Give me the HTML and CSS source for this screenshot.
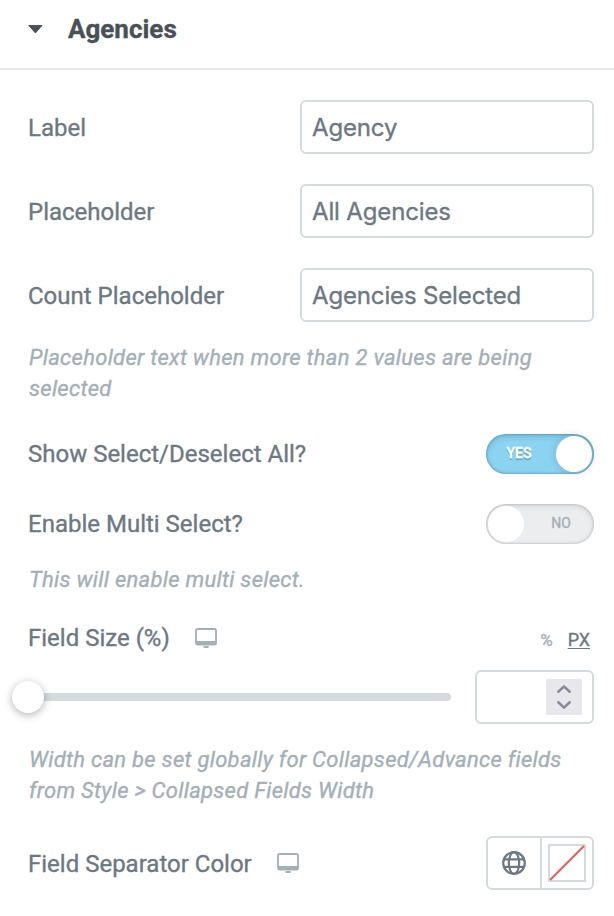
FILE: index.html
```html
<!DOCTYPE html>
<html lang="en">
<head>
<meta charset="utf-8">
<title>Agencies</title>
<link rel="stylesheet" href="styles.css">
</head>
<body>
<section class="panel">
  <header class="section-head">
    <svg class="caret" width="16" height="10" viewBox="0 0 16 10"><path d="M1.8 1.5H15L8.4 8.9Z" fill="#495157" stroke="#495157" stroke-linejoin="round"/></svg>
    <h1 class="section-title">Agencies</h1>
  </header>
  <div class="controls">
    <div class="control">
      <div class="row"><label class="label label-tall" for="f-label">Label</label><input class="input" id="f-label" type="text" value="Agency"></div>
    </div>
    <div class="control">
      <div class="row"><label class="label label-tall" for="f-ph">Placeholder</label><input class="input" id="f-ph" type="text" value="All Agencies"></div>
    </div>
    <div class="control">
      <div class="row"><label class="label label-tall" for="f-count">Count Placeholder</label><input class="input" id="f-count" type="text" value="Agencies Selected"></div>
      <p class="description">Placeholder text when more than 2 values are being selected</p>
    </div>
    <div class="control">
      <div class="row"><span class="label">Show Select/Deselect All?</span><div class="switch switch-on"><span class="switch-text">YES</span><span class="knob"></span></div></div>
    </div>
    <div class="control">
      <div class="row"><span class="label">Enable Multi Select?</span><div class="switch"><span class="knob"></span><span class="switch-text">NO</span></div></div>
      <p class="description">This will enable multi select.</p>
    </div>
    <div class="control">
      <div class="row size-head">
        <span class="label">Field Size (%)</span>
        <svg class="monitor" width="22" height="20" viewBox="0 0 22 20"><rect x="1" y="1" width="20" height="15.5" rx="1.6" fill="none" stroke="#a4afb7" stroke-width="1.8"/><path d="M1 13H21V15.5Q21 16.8 19.7 16.8H2.3Q1 16.8 1 15.5Z" fill="#a4afb7"/><path d="M9.3 19H12.9" stroke="#a4afb7" stroke-width="1.8" stroke-linecap="round"/></svg>
        <div class="units"><span class="unit">%</span><span class="unit unit-active">PX</span></div>
      </div>
      <div class="slider-row">
        <div class="slider"><span class="handle"></span><span class="track"></span></div>
        <div class="number">
          <div class="spinner"><svg width="36" height="36" viewBox="0 0 36 36" fill="none" stroke="#8b8a98" stroke-width="2.6" stroke-linecap="round" stroke-linejoin="round"><path d="M12.3 12.7L18 7.4L23.7 12.7"/><path d="M12.3 23.3L18 28.6L23.7 23.3"/></svg></div>
        </div>
      </div>
      <p class="description">Width can be set globally for Collapsed/Advance fields from Style &gt; Collapsed Fields Width</p>
    </div>
    <div class="control">
      <div class="row">
        <span class="label label-tall">Field Separator Color</span>
        <svg class="monitor" width="22" height="20" viewBox="0 0 22 20"><rect x="1" y="1" width="20" height="15.5" rx="1.6" fill="none" stroke="#a4afb7" stroke-width="1.8"/><path d="M1 13H21V15.5Q21 16.8 19.7 16.8H2.3Q1 16.8 1 15.5Z" fill="#a4afb7"/><path d="M9.3 19H12.9" stroke="#a4afb7" stroke-width="1.8" stroke-linecap="round"/></svg>
        <div class="color-group">
          <div class="color-cell globe"><svg width="24" height="24" viewBox="0 0 24 24" fill="none" stroke="#6d7882" stroke-width="2.2"><circle cx="12" cy="12" r="10.8"/><ellipse cx="12" cy="12" rx="5.2" ry="10.8"/><path d="M1.8 8.3H22.2M1.8 15.8H22.2"/></svg></div>
          <div class="color-cell"><svg width="38" height="38" viewBox="0 0 38 38"><rect x="1" y="1" width="36" height="36" fill="#fff" stroke="#d5dadf" stroke-width="2"/><path d="M2 36L36 2" stroke="#ea6462" stroke-width="2.3"/></svg></div>
        </div>
      </div>
    </div>
  </div>
</section>
</body>
</html>
```
FILE: styles.css
```css
* { box-sizing: border-box; }
body {
  margin: 0;
  background: #fff;
  color: #6d7882;
  font-family: Roboto, "Liberation Sans", sans-serif;
  font-size: 24px;
  -webkit-text-stroke: 0.35px currentColor;
}
svg { display: block; flex: none; }
.section-head {
  display: flex;
  align-items: center;
  height: 70px;
  padding: 0 28px 10px 27px;
  border-bottom: 2px solid #e6e9ec;
}
.caret { margin-right: 25px; }
.section-title {
  margin: 0;
  font-size: 26px;
  font-weight: 700;
  line-height: 30px;
  color: #495157;
}
.controls {
  display: flex;
  flex-direction: column;
  gap: 30px;
  padding: 30px 20px 26px 28px;
}
.row { display: flex; align-items: center; }
.label { line-height: 28px; white-space: nowrap; }
.label-tall { padding-top: 2px; }
.input {
  width: 294px;
  height: 54px;
  margin-left: auto;
  padding: 0 10px;
  border: 2px solid #d5dadf;
  border-radius: 6px;
  outline: none;
  background: #fff;
  color: #6d7882;
  font: 24px/28px Inter, sans-serif;
  letter-spacing: -0.15px;
}
.description {
  margin: 20px 0 0 1px;
  color: #a4afb7;
  font-size: 22px;
  font-style: italic;
  letter-spacing: 0.28px;
  line-height: 31px;
}
.switch {
  display: flex;
  align-items: center;
  width: 108px;
  height: 40px;
  margin-left: auto;
  padding: 2px;
  border-radius: 20px;
  background: #ebedef;
  box-shadow: inset 0 0 2px 1px rgba(0,0,0,.12), inset 0 2px 6px rgba(0,0,0,.1);
  color: #a4afb7;
  font-size: 14px;
  font-weight: 400;
}
.switch-text { flex: 1; padding-left: 6px; text-align: center; line-height: 18px; margin-top: -2px; }
.switch-on {
  background: #8bd3f1;
  box-shadow: inset 0 0 2px 1px rgba(0,60,90,.22), inset 0 2px 6px rgba(0,60,90,.18);
  color: #fff;
}
.switch-on .switch-text { padding: 0 6px 0 0; font-weight: 500; text-shadow: 0 2px 1px rgba(0,0,0,.25); }
.knob {
  width: 36px;
  height: 36px;
  border-radius: 50%;
  background: #fff;
}
.switch-on .knob { box-shadow: 0 0 8px 1px rgba(0,0,0,.13); }
.monitor { margin-left: 25px; }
.size-head { height: 26px; }
.units {
  display: flex;
  gap: 15px;
  margin-left: auto;
  padding: 3px 4px 0 0;
  font-size: 18px;
  line-height: 22px;
}
.unit { color: #a4afb7; }
.unit:first-child { font-size: 17px; }
.unit-active { color: #6d7882; text-decoration: underline; text-underline-offset: 2px; }
.slider-row {
  display: flex;
  align-items: center;
  justify-content: space-between;
  margin-top: 19px;
}
.slider { display: flex; align-items: center; width: 439px; margin-left: -16px; }
.handle {
  z-index: 1;
  width: 32px;
  height: 32px;
  border-radius: 50%;
  background: #fff;
  box-shadow: 0 2px 8px rgba(0,0,0,.3);
}
.track { flex: 1; height: 8px; margin-left: -8px; border-radius: 4px; background: #d5dadf; }
.number {
  display: flex;
  align-items: center;
  justify-content: flex-end;
  width: 119px;
  height: 54px;
  padding-right: 10px;
  border: 2px solid #d5dadf;
  border-radius: 6px;
}
.spinner { background: #e8e7ec; }
.color-group {
  display: flex;
  width: 108px;
  height: 54px;
  margin-left: auto;
  border: 2px solid #d5dadf;
  border-radius: 6px;
}
.color-cell { display: flex; flex: 1; align-items: center; justify-content: center; }
.globe { flex: none; width: 54px; border-right: 2px solid #d5dadf; }
```
